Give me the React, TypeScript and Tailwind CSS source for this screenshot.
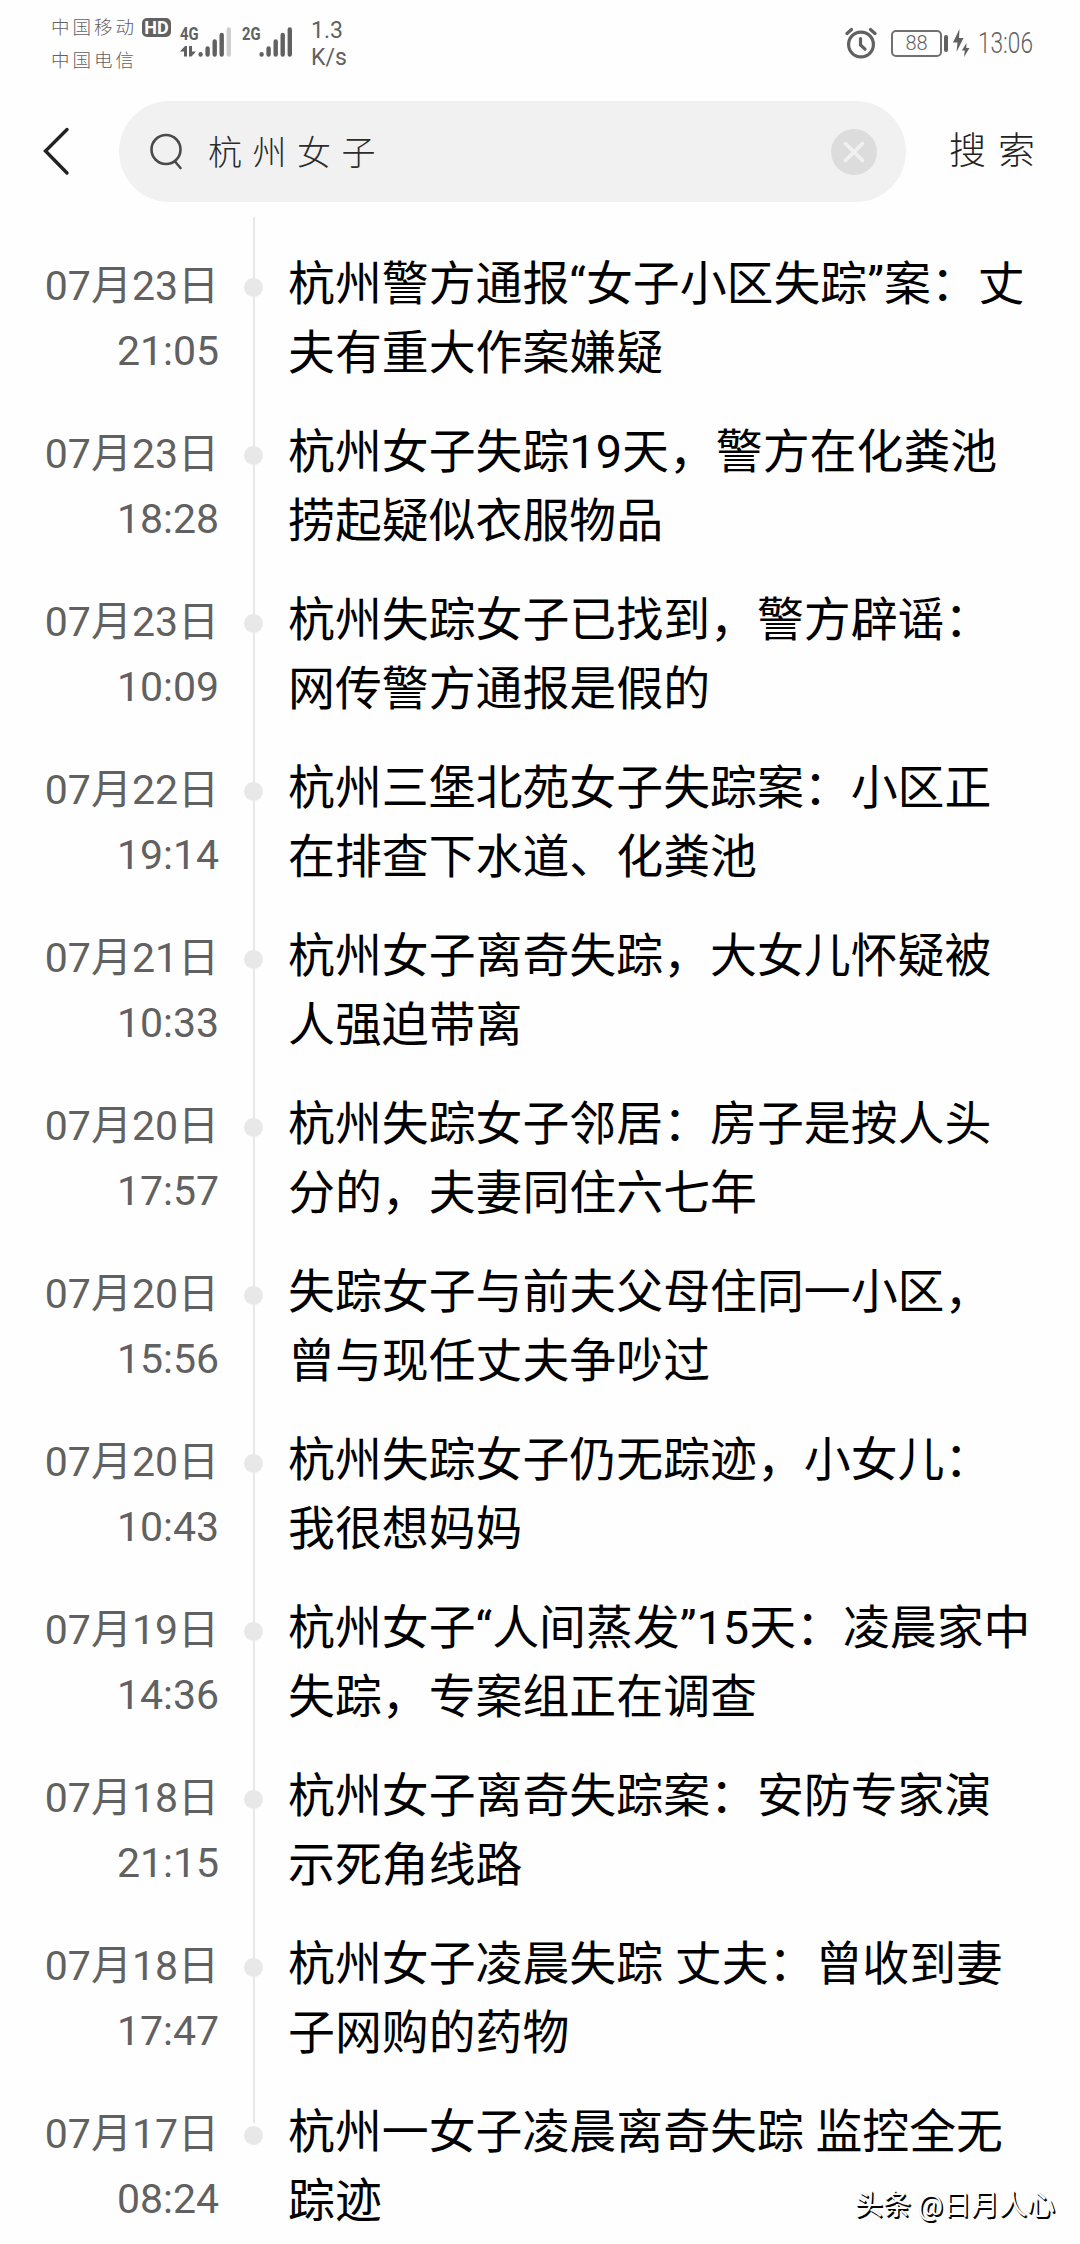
interface TimelineItem {
  date: string;
  time: string;
  lines: [string, string];
}

const items: TimelineItem[] = [
  { date: "07月23日", time: "21:05", lines: ["杭州警方通报“女子小区失踪”案：丈", "夫有重大作案嫌疑"] },
  { date: "07月23日", time: "18:28", lines: ["杭州女子失踪19天，警方在化粪池", "捞起疑似衣服物品"] },
  { date: "07月23日", time: "10:09", lines: ["杭州失踪女子已找到，警方辟谣：", "网传警方通报是假的"] },
  { date: "07月22日", time: "19:14", lines: ["杭州三堡北苑女子失踪案：小区正", "在排查下水道、化粪池"] },
  { date: "07月21日", time: "10:33", lines: ["杭州女子离奇失踪，大女儿怀疑被", "人强迫带离"] },
  { date: "07月20日", time: "17:57", lines: ["杭州失踪女子邻居：房子是按人头", "分的，夫妻同住六七年"] },
  { date: "07月20日", time: "15:56", lines: ["失踪女子与前夫父母住同一小区，", "曾与现任丈夫争吵过"] },
  { date: "07月20日", time: "10:43", lines: ["杭州失踪女子仍无踪迹，小女儿：", "我很想妈妈"] },
  { date: "07月19日", time: "14:36", lines: ["杭州女子“人间蒸发”15天：凌晨家中", "失踪，专案组正在调查"] },
  { date: "07月18日", time: "21:15", lines: ["杭州女子离奇失踪案：安防专家演", "示死角线路"] },
  { date: "07月18日", time: "17:47", lines: ["杭州女子凌晨失踪 丈夫：曾收到妻", "子网购的药物"] },
  { date: "07月17日", time: "08:24", lines: ["杭州一女子凌晨离奇失踪 监控全无", "踪迹"] },
];

const SignalBars = ({ weak = false }: { weak?: boolean }) => (
  <svg width="34" height="32" viewBox="0 0 34 32" fill="none" stroke="#616161" strokeWidth="4.4" strokeLinecap="round">
    <path d="M2.6 28.2v.4M9.6 22.5v6.1M16.7 15.5v13.1M23.7 9v19.6" />
    <path d="M30.8 3.5v25.1" stroke={weak ? "#cfcfcf" : "#616161"} />
  </svg>
);

const StatusBar = () => (
  <div className="flex h-[90px] items-start text-[#616161]">
    <div className="ml-[51px] mt-[15px] flex w-[91px] flex-col text-[18.5px] font-light leading-[26px] tracking-[3px]">
      <span className="whitespace-nowrap">中国移动</span>
      <span className="mt-[7px] whitespace-nowrap">中国电信</span>
    </div>
    <div className="mt-[18px] flex h-[19px] w-[29px] items-center justify-center rounded-[5px] bg-[#616161] text-[18px] font-bold leading-none text-white">
      HD
    </div>
    <div className="ml-[9px] mt-[26px] flex w-[18px] flex-col">
      <span className="origin-left scale-x-[0.78] text-[19px] font-bold leading-[16px]">4G</span>
      <svg className="mt-[3px]" width="18" height="12" viewBox="0 0 18 12" fill="#616161">
        <path d="M0 6.5 5 1h2v10.5H4V6.5zM9 1h3v5.5h4L11.5 11.5H9z" />
      </svg>
    </div>
    <div className="mt-[26px]">
      <SignalBars weak />
    </div>
    <span className="ml-[10px] mt-[26px] block w-[17px] origin-left scale-x-[0.78] text-[19px] font-bold leading-[16px]">2G</span>
    <div className="mt-[26px]">
      <SignalBars />
    </div>
    <div className="ml-[18px] mt-[17px] flex flex-col text-[23px] leading-[27px]">
      <span>1.3</span>
      <span>K/s</span>
    </div>
    <div className="ml-auto mr-[48px] mt-[26px] flex h-[34px] items-center">
      <svg width="32" height="32" viewBox="0 0 32 32" fill="none" stroke="#616161" strokeWidth="3.2" strokeLinecap="round">
        <circle cx="16" cy="17.5" r="12.4" />
        <path d="M15.5 11.5v6.5l4.5 4.2" />
        <path d="M2 6.5 6.5 2.5M25.5 2.5l4.5 4" />
      </svg>
      <div className="ml-[14px] flex h-[27px] w-[51px] items-center justify-center rounded-[5px] border-2 border-[#707070] text-[20px] font-light leading-none">
        88
      </div>
      <div className="ml-[2px] h-[17px] w-[4px] rounded-[2px] bg-[#616161]" />
      <svg className="ml-[5px]" width="17" height="28" viewBox="0 0 17 28" fill="#616161">
        <path d="M6.5 0 0 13.5h4.5L3.5 23 10.5 9H6zM13.5 14 8.8 21.5h3L11 28l5.5-9h-3.2z" />
      </svg>
      <span className="ml-[8px] block w-[54px] origin-left scale-x-[0.78] whitespace-nowrap text-[29px] font-light leading-[34px]">13:06</span>
    </div>
  </div>
);

const SearchHeader = () => (
  <div className="flex h-[127px] items-start">
    <svg className="ml-[41px] mt-[36px]" width="30" height="50" viewBox="0 0 30 50" fill="none" stroke="#222" strokeWidth="3.4" strokeLinecap="round">
      <path d="M26 3.5 4.5 25 26 47" />
    </svg>
    <div className="ml-[48px] mt-[11px] flex h-[101px] w-[787px] items-center rounded-full bg-[#f1f1f1]">
      <svg className="ml-[31px]" width="34" height="38" viewBox="0 0 34 38" fill="none" stroke="#4a4a4a" strokeWidth="2.6" strokeLinecap="round">
        <circle cx="16" cy="16.5" r="14.5" />
        <path d="m25 28.5 5.5 6.5" />
      </svg>
      <span className="ml-[24px] mt-[3px] text-[34px] font-light leading-[48px] tracking-[10.5px] text-[#2b2b2b]">杭州女子</span>
      <div className="ml-auto mr-[29px] flex size-[46px] items-center justify-center rounded-full bg-[#dcdcdc]">
        <svg width="22" height="22" viewBox="0 0 22 22" stroke="#f1f1f1" strokeWidth="3.4" strokeLinecap="round">
          <path d="m2.5 2.5 17 17M19.5 2.5l-17 17" />
        </svg>
      </div>
    </div>
    <span className="ml-[43px] mt-[38px] whitespace-nowrap text-[37px] font-light leading-[48px] tracking-[12px] text-[#222]">搜索</span>
  </div>
);

const TimelineRow = ({ item }: { item: TimelineItem }) => (
  <li className="flex h-[168px]">
    <div className="w-[219px] pt-[37px] text-right text-[41px] leading-[64.5px] text-[#616161]">
      <div>{item.date}</div>
      <div>{item.time}</div>
    </div>
    <div className="flex w-[69px] justify-center pt-[61px]">
      <span className="relative block size-[19px] rounded-full bg-[#e8e8e8]" />
    </div>
    <div className="whitespace-nowrap pt-[32px] text-[46.9px] leading-[69px] text-black">
      <div>{item.lines[0]}</div>
      <div>{item.lines[1]}</div>
    </div>
  </li>
);

export default function App() {
  return (
    <div
      lang="zh-CN"
      className="relative h-[2244px] w-[1080px] overflow-hidden bg-[#fefefe] font-[Roboto,'Noto_Sans_CJK_SC',sans-serif]"
    >
      <StatusBar />
      <SearchHeader />
      <div className="relative">
        {/* rail behind the dots, stops just above the last one */}
        <div className="absolute left-[253px] top-0 h-[1906px] w-[2px] bg-[#e8e8e8]" />
        <ul>
          {items.map((item) => (
            <TimelineRow key={`${item.date}-${item.time}`} item={item} />
          ))}
        </ul>
      </div>
      <div className="absolute right-[25px] bottom-[20px] whitespace-nowrap text-[28px] leading-[36px] text-white [text-shadow:1px_1px_1px_#000,1.5px_1.5px_0_#000]">
        头条 @日月人心
      </div>
    </div>
  );
}
